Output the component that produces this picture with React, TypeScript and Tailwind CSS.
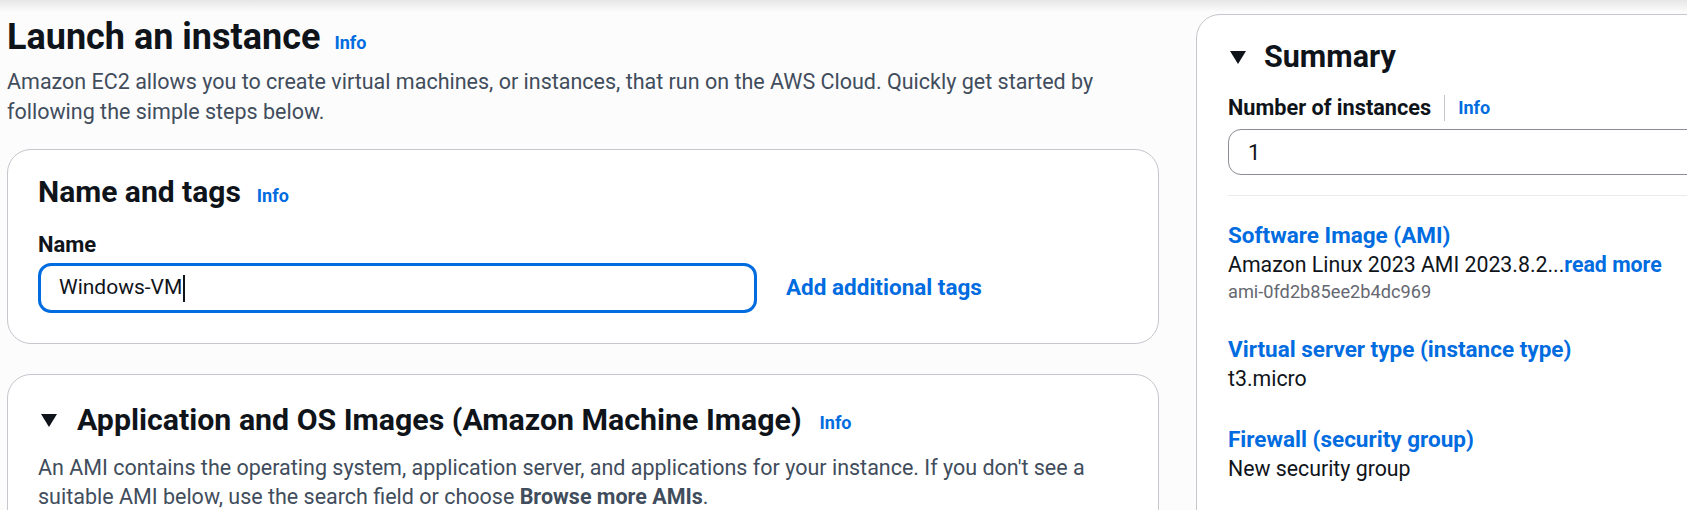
import React from 'react';

const Caret = ({ className = '' }: { className?: string }) => (
  <svg viewBox="0 0 16 13" className={`h-[13px] w-[16px] shrink-0 ${className}`}>
    <polygon points="0,0 16,0 8,13" fill="#0f141a" />
  </svg>
);

const InfoLink = ({ className = '' }: { className?: string }) => (
  <span className={`text-[18px] font-bold text-[#006ce0] ${className}`}>Info</span>
);

const SummaryItem = ({ label, children }: { label: string; children: React.ReactNode }) => (
  <div className="mt-[30px] first:mt-0">
    <div className="text-[22.5px] leading-[30px] font-bold text-[#006ce0]">{label}</div>
    {children}
  </div>
);

export default function App() {
  return (
    <div className="relative h-[510px] w-full overflow-hidden bg-[#fcfcfc] font-[Roboto,sans-serif] text-[#0f141a]">
      <div className="pointer-events-none absolute inset-x-0 top-0 h-[12px] bg-gradient-to-b from-[#e6e6e6] to-transparent" />

      <div className="flex gap-[37px] pl-[7px]">
        {/* left column */}
        <div className="w-[1152px] shrink-0 pt-[15px]">
          <h1 className="flex items-baseline gap-[14px] text-[36px] leading-[44px] font-bold">
            Launch an instance
            <InfoLink />
          </h1>
          <p className="mt-[2px] text-[21.5px] leading-[30px] text-[#414d5c]">
            Amazon EC2 allows you to create virtual machines, or instances, that run on the AWS Cloud. Quickly get started by
            <br />
            following the simple steps below.
          </p>

          <div className="mt-[22px] rounded-[24px] border border-[#c6c6cd] bg-white pt-[24px] pb-[30px] pl-[30px]">
            <h2 className="flex items-baseline gap-[16px] text-[30px] leading-[36px] font-bold">
              Name and tags
              <InfoLink />
            </h2>
            <div className="mt-[16px] text-[22px] leading-[30px] font-bold">Name</div>
            <div className="mt-[3px] flex items-center gap-[29px]">
              <div className="flex h-[50px] w-[719px] items-center rounded-[13px] border-[3px] border-[#006ce0] bg-white pl-[18px] text-[21px]">
                Windows-VM
                <span className="ml-[1px] h-[27px] w-[2px] bg-[#0f141a]" />
              </div>
              <span className="text-[22.5px] font-bold text-[#006ce0]">Add additional tags</span>
            </div>
          </div>

          <div className="mt-[30px] h-[200px] rounded-[24px] border border-[#c6c6cd] bg-white pt-[24px] pl-[30px]">
            <h2 className="flex items-center text-[30.3px] leading-[36px] font-bold">
              <Caret className="ml-[3px] mr-[20px]" />
              Application and OS Images (Amazon Machine Image)
              <InfoLink className="ml-[18px] mt-[6px]" />
            </h2>
            <p className="mt-[12px] text-[21.5px] leading-[29px] text-[#414d5c]">
              An AMI contains the operating system, application server, and applications for your instance. If you don't see a
              <br />
              suitable AMI below, use the search field or choose <b>Browse more AMIs</b>.
            </p>
          </div>
        </div>

        {/* summary panel */}
        <div className="mt-[14px] h-[560px] w-[640px] shrink-0 rounded-[24px] border border-[#c6c6cd] bg-white pt-[24px] pl-[31px]">
          <h2 className="flex items-center text-[30.5px] leading-[36px] font-bold">
            <Caret className="ml-[2px] mr-[18px]" />
            Summary
          </h2>
          <div className="mt-[18px] flex items-center text-[21.7px] leading-[30px] font-bold">
            Number of instances
            <span className="mx-[13px] h-[26px] w-px bg-[#c6c6cd]" />
            <InfoLink />
          </div>
          <div className="mt-[6px] flex h-[46px] items-center rounded-[13px] border-[1.5px] border-[#8c8c94] bg-white pl-[19px] text-[22px]">
            1
          </div>
          <div className="mt-[20px] h-px bg-[#e9ebed]" />

          <div className="mt-[24px]">
            <SummaryItem label="Software Image (AMI)">
              <div className="text-[21.3px] leading-[30px]">
                Amazon Linux 2023 AMI 2023.8.2...<span className="font-bold text-[#006ce0]">read more</span>
              </div>
              <div className="text-[18.2px] leading-[24px] text-[#656871]">ami-0fd2b85ee2b4dc969</div>
            </SummaryItem>
            <SummaryItem label="Virtual server type (instance type)">
              <div className="text-[21.3px] leading-[30px]">t3.micro</div>
            </SummaryItem>
            <SummaryItem label="Firewall (security group)">
              <div className="text-[21.3px] leading-[30px]">New security group</div>
            </SummaryItem>
          </div>
        </div>
      </div>
    </div>
  );
}
